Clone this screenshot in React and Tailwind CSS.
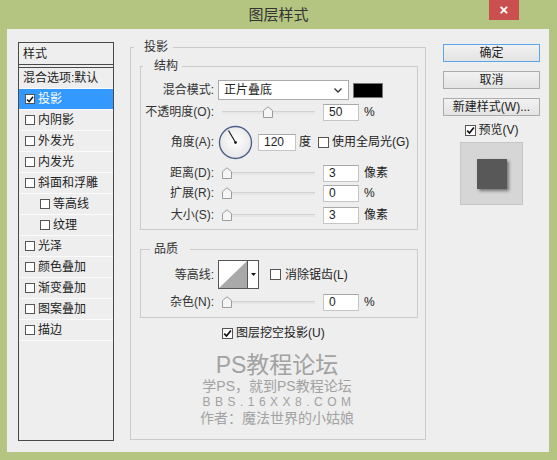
import React from "react";

const CheckMark = () => (
  <svg width="9" height="9" viewBox="0 0 9 9" className="block">
    <path d="M1.2 4.6 L3.5 7 L7.9 1.5" fill="none" stroke="#111" strokeWidth="1.7" />
  </svg>
);

function Box({ checked = false, className = "w-[11px] h-[11px]" }) {
  return (
    <span className={`${className} shrink-0 bg-white border border-[#555] flex items-center justify-center`}>
      {checked && <CheckMark />}
    </span>
  );
}

function Slider({ thumb = "left-0" }) {
  return (
    <div className="relative w-[93px] h-[14px] ml-[4px]">
      <div className="absolute left-0 right-0 top-[6px] h-[3px] bg-[#e6e6e6] border-t border-[#d2d2d2]" />
      <svg className={`absolute top-[1px] ${thumb}`} width="10" height="12" viewBox="0 0 10 12">
        <path d="M0.5 11.5 V4.5 L5 0.8 L9.5 4.5 V11.5 Z" fill="#f5f5f5" stroke="#9c9c9c" />
      </svg>
    </div>
  );
}

function Input({ value, className = "w-[36px] ml-[8px]" }) {
  return (
    <div className={`${className} h-[17px] bg-white border border-[#c5c5c5] border-t-[#a9a9a9] pl-[5px] leading-[15px] text-[12px] text-[#222]`}>
      {value}
    </div>
  );
}

function Row({ label, className = "", children }) {
  return (
    <div className={`flex items-center ${className}`}>
      <span className="w-[73px] text-right text-[#333]">{label}</span>
      <div className="ml-[4px] flex items-center">{children}</div>
    </div>
  );
}

function Dial() {
  return (
    <svg width="35" height="35" viewBox="0 0 35 35" className="block">
      <defs>
        <radialGradient id="dg" cx="50%" cy="45%" r="55%">
          <stop offset="0%" stopColor="#ffffff" />
          <stop offset="100%" stopColor="#e6e6e6" />
        </radialGradient>
      </defs>
      <circle cx="17.5" cy="17.5" r="16" fill="url(#dg)" stroke="#4f6189" strokeWidth="1.4" />
      <line x1="17.5" y1="17.5" x2="10.5" y2="5.5" stroke="#222" strokeWidth="1.2" />
      <circle cx="17.5" cy="17.5" r="1.4" fill="#222" />
    </svg>
  );
}

function Contour() {
  return (
    <div className="w-[41px] h-[29px] flex border border-[#555] bg-white">
      <svg width="28" height="27" viewBox="0 0 28 27" className="block">
        <path d="M0 27 L28 0 L28 27 Z" fill="#a9a9a9" />
      </svg>
      <div className="flex-1 border-l border-[#555] flex items-center justify-center">
        <svg width="5" height="3" viewBox="0 0 5 3"><path d="M0 0 H5 L2.5 3 Z" fill="#111" /></svg>
      </div>
    </div>
  );
}

const styles = [
  { name: "内阴影" },
  { name: "外发光" },
  { name: "内发光" },
  { name: "斜面和浮雕" },
  { name: "等高线", indent: true },
  { name: "纹理", indent: true },
  { name: "光泽" },
  { name: "颜色叠加" },
  { name: "渐变叠加" },
  { name: "图案叠加" },
  { name: "描边" },
];

function Button({ children, primary = false, className = "" }) {
  return (
    <div
      className={`${className} w-[97px] h-[18px] flex items-center justify-center border bg-gradient-to-b from-[#f2f2f2] to-[#e3e3e3] text-[12px] text-[#222] ${
        primary ? "border-[#5aa6ec]" : "border-[#acacac]"
      }`}
    >
      {children}
    </div>
  );
}

export default function App() {
  return (
    <div className="w-[557px] h-[460px] bg-[#b4c582] flex flex-col font-['Liberation_Sans','Noto_Sans_CJK_SC',sans-serif] text-[12px] text-[#222] leading-[16px]">
      {/* title bar */}
      <div className="h-[29px] grid grid-cols-[1fr_auto_1fr] shrink-0">
        <div />
        <div className="self-center text-[15px] text-[#333] pt-[1px]">图层样式</div>
        <div className="flex justify-end items-start pr-[38px]">
          <div className="w-[30px] h-[20px] bg-[#c9504f] text-white flex items-center justify-center text-[15px] font-bold">
            ×
          </div>
        </div>
      </div>

      {/* dialog body */}
      <div className="flex-1 ml-[7px] mr-[8px] mb-[8px] bg-[#eeeeee] flex items-start pl-[11px] pt-[10px]">
        {/* styles list */}
        <div className="mt-[3px] w-[96px] h-[399px] border border-[#4a4a4a] flex flex-col">
          <div className="h-[22px] border-b border-[#4a4a4a] pl-[4px] flex items-center">样式</div>
          <div className="mt-[2px] border-t border-[#4a4a4a]">
            <div className="h-[21px] border-b border-[#fbfbfb] pl-[4px] flex items-center">混合选项:默认</div>
            <div className="h-[21px] border-b border-[#fbfbfb] pl-[6px] flex items-center bg-[#3399ff] text-white">
              <Box checked className="w-[10px] h-[10px]" />
              <span className="ml-[3px]">投影</span>
            </div>
            {styles.map((s) => (
              <div
                key={s.name}
                className={`h-[21px] border-b border-[#fbfbfb] flex items-center ${s.indent ? "pl-[21px]" : "pl-[6px]"}`}
              >
                <Box className="w-[10px] h-[10px]" />
                <span className="ml-[3px]">{s.name}</span>
              </div>
            ))}
          </div>
        </div>

        {/* drop shadow settings */}
        <fieldset className="ml-[16px] w-[296px] h-[401px] border border-[#cbcbcb] pl-[9px] pr-[7px]">
          <legend className="ml-[-6px] pl-[10px] pr-[5px] leading-[16px] text-[#333]">投影</legend>

          <fieldset className="mt-[3px] border border-[#cbcbcb] pt-[6px] pb-[4px]">
            <legend className="ml-[2px] pl-[11px] pr-[4px] leading-[16px] text-[#333]">结构</legend>

            <Row label="混合模式:" className="h-[20px]">
              <div className="w-[131px] h-[20px] bg-white border border-[#ababab] flex items-center justify-between pl-[5px] pr-[6px]">
                <span>正片叠底</span>
                <svg width="8" height="5" viewBox="0 0 8 5"><path d="M0.5 0.5 L4 4 L7.5 0.5" fill="none" stroke="#333" strokeWidth="1.3" /></svg>
              </div>
              <div className="ml-[4px] w-[30px] h-[15px] bg-black border border-[#777]" />
            </Row>

            <Row label="不透明度(O):" className="mt-[3px] h-[18px]">
              <Slider thumb="left-[41px]" />
              <Input value="50" />
              <span className="ml-[5px]">%</span>
            </Row>

            <Row label="角度(A):" className="mt-[4px] h-[34px]">
              <Dial />
              <Input value="120" className="w-[38px] ml-[5px]" />
              <span className="ml-[3px]">度</span>
              <span className="ml-[7px]"><Box /></span>
              <span className="ml-[3px]">使用全局光(G)</span>
            </Row>

            <Row label="距离(D):" className="mt-[4px] h-[20px]">
              <Slider />
              <Input value="3" />
              <span className="ml-[5px]">像素</span>
            </Row>

            <Row label="扩展(R):" className="h-[20px]">
              <Slider />
              <Input value="0" />
              <span className="ml-[5px]">%</span>
            </Row>

            <Row label="大小(S):" className="mt-[2px] h-[20px]">
              <Slider />
              <Input value="3" />
              <span className="ml-[5px]">像素</span>
            </Row>
          </fieldset>

          <fieldset className="mt-[11px] border border-[#cbcbcb] pt-[3px] pb-[6px]">
            <legend className="ml-[9px] pl-[4px] pr-[12px] leading-[16px] text-[#333]">品质</legend>

            <Row label="等高线:" className="h-[29px]">
              <Contour />
              <span className="ml-[11px]"><Box /></span>
              <span className="ml-[4px]">消除锯齿(L)</span>
            </Row>

            <Row label="杂色(N):" className="mt-[4px] h-[18px]">
              <Slider />
              <Input value="0" />
              <span className="ml-[5px]">%</span>
            </Row>
          </fieldset>

          <div className="mt-[8px] h-[14px] flex items-center pl-[82px]">
            <Box checked />
            <span className="ml-[3px]">图层挖空投影(U)</span>
          </div>

          <div className="mt-[12px] flex flex-col items-center pr-[4px] text-[#a2a2a2]">
            <div className="text-[23px] leading-[26px]">PS教程论坛</div>
            <div className="text-[14px] leading-[16px]">学PS，就到PS教程论坛</div>
            <div className="text-[12px] leading-[16px] tracking-[4.5px] pl-[4px]">BBS.16XX8.COM</div>
            <div className="text-[14px] leading-[17px]">作者：魔法世界的小姑娘</div>
          </div>
        </fieldset>

        {/* buttons */}
        <div className="ml-[17px] mt-[5px] w-[97px] flex flex-col items-center">
          <Button primary>确定</Button>
          <Button className="mt-[9px]">取消</Button>
          <Button className="mt-[9px]">新建样式(W)...</Button>
          <div className="mt-[6px] h-[16px] flex items-center">
            <Box checked />
            <span className="ml-[3px]">预览(V)</span>
          </div>
          <div className="mt-[4px] w-[63px] h-[63px] bg-[#d6d6d6] border border-[#c6c6c6] flex items-center justify-center">
            <div className="w-[30px] h-[30px] bg-[#585858] shadow-[2px_2px_3px_rgba(0,0,0,0.45)]" />
          </div>
        </div>
      </div>
    </div>
  );
}
